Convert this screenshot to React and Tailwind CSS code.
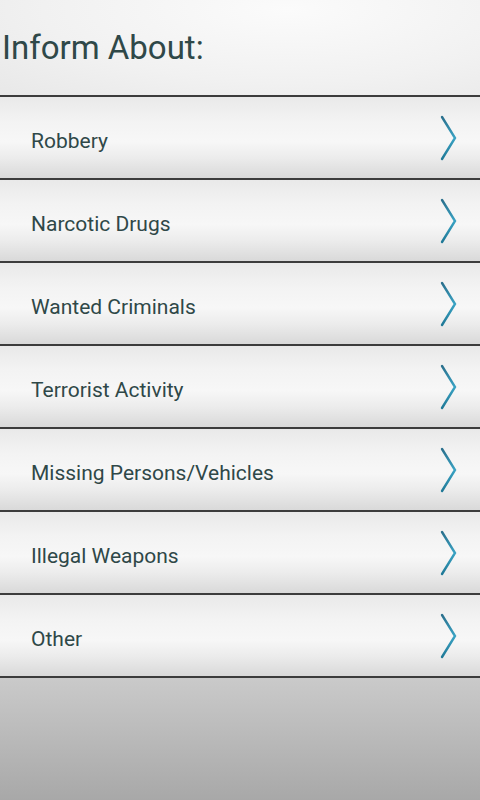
// App.jsx — "Inform About" category list.

const ITEMS = [
  'Robbery',
  'Narcotic Drugs',
  'Wanted Criminals',
  'Terrorist Activity',
  'Missing Persons/Vehicles',
  'Illegal Weapons',
  'Other',
]

function Chevron() {
  return (
    <svg width="20" height="46" viewBox="0 0 20 46" className="shrink-0">
      <defs>
        <linearGradient id="chev" x1="0" y1="0" x2="0" y2="1">
          <stop offset="0" stopColor="#2a6f8c" />
          <stop offset="0.5" stopColor="#3aa3c4" />
          <stop offset="1" stopColor="#1f7896" />
        </linearGradient>
      </defs>
      <path d="M2 2 L15 23 L2 44" fill="none" stroke="url(#chev)" strokeWidth="2.4" strokeLinecap="round" strokeLinejoin="miter" />
    </svg>
  )
}

function Row({ label }) {
  return (
    <button
      type="button"
      className="flex h-[83px] w-full shrink-0 items-center justify-between border-b-2 border-[#3c3c3c] bg-[linear-gradient(to_bottom,#e9e9e9_0%,#f3f3f3_30%,#f7f7f7_55%,#ececec_75%,#d9d9d9_100%)] pl-[31px] pr-[20px] text-left"
    >
      <span className="pt-[8px] text-[21px] text-[#2f4848]">{label}</span>
      <Chevron />
    </button>
  )
}

export default function App() {
  return (
    <div className="flex h-[800px] w-[480px] flex-col font-['Roboto','Noto_Sans',sans-serif]">
      <div className="h-[97px] shrink-0 border-b-2 border-[#3c3c3c] bg-[radial-gradient(ellipse_at_60%_10%,#fbfbfb_0%,#f1f1f1_60%,#e8e8e8_100%)] pl-[2px] pt-[28px]">
        <h1 className="text-[33px] leading-[40px] text-[#2f4848]">Inform About:</h1>
      </div>
      {ITEMS.map((it) => (
        <Row key={it} label={it} />
      ))}
      <div className="flex-1 bg-[linear-gradient(to_bottom,#cacaca,#a8a8a8)]" />
    </div>
  )
}
